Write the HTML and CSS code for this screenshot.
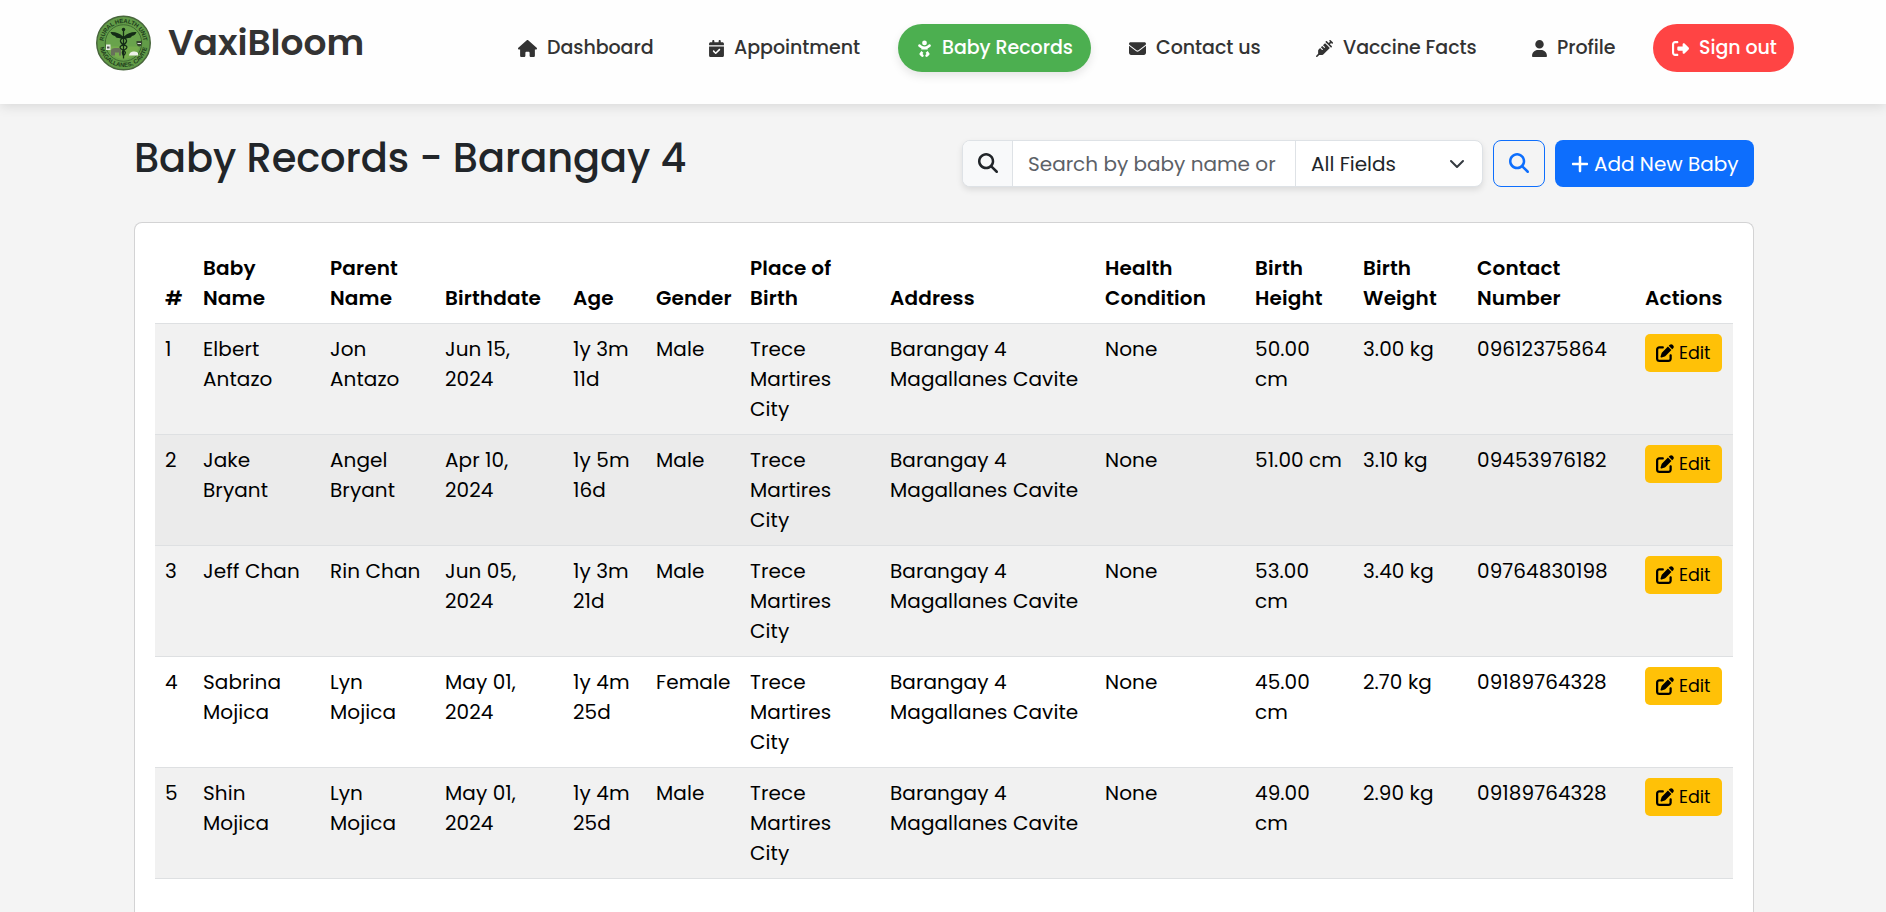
FILE: index.html
```html
<!DOCTYPE html>
<html lang="en">
<head>
<meta charset="utf-8">
<title>VaxiBloom - Baby Records</title>
<link rel="stylesheet" href="styles.css">
</head>
<body>
<svg class="sprite" aria-hidden="true">
  <symbol id="house" viewBox="0 0 576 512"><path d="M575.8 255.5c0 18-15 32.1-32 32.1h-32l.7 160.2c0 2.7-.2 5.4-.5 8.1V472c0 22.1-17.9 40-40 40H392c-22.1 0-40-17.9-40-40V384c0-17.7-14.3-32-32-32H256c-17.7 0-32 14.3-32 32v88c0 22.1-17.9 40-40 40H104c-22.1 0-40-17.9-40-40V287.6H32c-18 0-32-14-32-32.1c0-9 3-17 10-24L266.4 8c7-7 15-8 22-8s15 2 21 7L564.8 231.5c8 7 12 15 11 24z"/></symbol>
  <symbol id="calendar" viewBox="0 0 448 512"><path d="M128 0c17.7 0 32 14.3 32 32V64H288V32c0-17.7 14.3-32 32-32s32 14.3 32 32V64h48c26.5 0 48 21.5 48 48v48H0V112C0 85.5 21.5 64 48 64H96V32c0-17.7 14.3-32 32-32zM0 192H448V464c0 26.5-21.5 48-48 48H48c-26.5 0-48-21.5-48-48V192zM329 305c9.4-9.4 9.4-24.6 0-33.9s-24.6-9.4-33.9 0l-95 95-47-47c-9.4-9.4-24.6-9.4-33.9 0s-9.4 24.6 0 33.9l64 64c9.4 9.4 24.6 9.4 33.9 0L329 305z"/></symbol>
  <symbol id="baby" viewBox="0 0 448 512"><path d="M152 88a72 72 0 1 1 144 0A72 72 0 1 1 152 88zM39.7 144.5c13-17.9 38-21.8 55.9-8.8L131.8 162c26.8 19.5 59.1 30 92.2 30s65.4-10.5 92.2-30l36.2-26.4c17.9-13 42.9-9 55.9 8.8s9 42.9-8.800 55.9l-36.2 26.4c-13.6 9.9-28.1 18.2-43.3 25V288H128V251.7c-15.2-6.7-29.7-15.1-43.3-25L48.5 200.3c-17.9-13-21.8-38-8.8-55.9zm89.800 184.8l60.6 53-26 37.2 24.3 24.3c15.6 15.6 15.6 40.9 0 56.6s-40.9 15.6-56.6 0l-48-48C70 438.6 68.1 417 79.2 401.1l50.2-71.8zm128.5 53l60.6-53 50.2 71.8c11.1 15.9 9.2 37.5-4.5 51.2l-48 48c-15.6 15.6-40.9 15.6-56.6 0s-15.6-40.9 0-56.6L284 419.5l-26-37.2z"/></symbol>
  <symbol id="envelope" viewBox="0 0 512 512"><path d="M48 64C21.5 64 0 85.5 0 112c0 15.1 7.1 29.3 19.2 38.4L236.8 313.6c11.4 8.5 27 8.5 38.4 0L492.8 150.4c12.1-9.1 19.2-23.3 19.2-38.4c0-26.5-21.5-48-48-48H48zM0 176V384c0 35.3 28.7 64 64 64H448c35.3 0 64-28.7 64-64V176L294.4 339.2c-22.8 17.1-54 17.1-76.8 0L0 176z"/></symbol>
  <symbol id="syringe" viewBox="0 0 512 512"><path d="M441 7l32 32 32 32c9.4 9.4 9.4 24.6 0 33.9s-24.6 9.4-33.9 0l-15-15L417.9 128l55 55c9.4 9.4 9.4 24.6 0 33.9s-24.6 9.4-33.9 0l-72-72L295 73c-9.4-9.4-9.4-24.6 0-33.9s24.6-9.4 33.9 0l55 55L422.1 56 407 41c-9.4-9.4-9.4-24.6 0-33.9s24.6-9.4 33.9 0zM210.3 155.7l61.1-61.1c.3 .3 .6 .7 1 1l16 16 56 56 56 56 16 16c.3 .3 .6 .6 1 1l-191 191c-10.5 10.5-24.7 16.4-39.6 16.4H97.9L41 505c-9.4 9.4-24.6 9.4-33.9 0s-9.4-24.6 0-33.9l57-57V325.3c0-14.9 5.9-29.1 16.4-39.6l43.3-43.3 57 57c6.2 6.2 16.4 6.2 22.6 0s6.2-16.4 0-22.6l-57-57 41.4-41.4 57 57c6.2 6.2 16.4 6.2 22.6 0s6.2-16.4 0-22.6l-57-57z"/></symbol>
  <symbol id="user" viewBox="0 0 448 512"><path d="M224 256A128 128 0 1 0 224 0a128 128 0 1 0 0 256zm-45.7 48C79.8 304 0 383.8 0 482.3C0 498.7 13.3 512 29.7 512H418.3c16.4 0 29.7-13.3 29.7-29.7C448 383.8 368.2 304 269.7 304H178.3z"/></symbol>
  <symbol id="signout" viewBox="0 0 512 512"><path d="M377.9 105.9L500.7 228.7c7.2 7.2 11.3 17.1 11.3 27.3s-4.1 20.1-11.3 27.3L377.9 406.1c-6.4 6.4-15 9.9-24 9.9c-18.7 0-33.9-15.2-33.9-33.9l0-62.1-128 0c-17.7 0-32-14.3-32-32l0-64c0-17.7 14.3-32 32-32l128 0 0-62.1c0-18.7 15.2-33.9 33.9-33.9c9 0 17.6 3.6 24 9.9zM160 96L96 96c-17.7 0-32 14.3-32 32l0 256c0 17.7 14.3 32 32 32l64 0c17.7 0 32 14.3 32 32s-14.3 32-32 32l-64 0c-53 0-96-43-96-96L0 128C0 75 43 32 96 32l64 0c17.7 0 32 14.3 32 32s-14.3 32-32 32z"/></symbol>
  <symbol id="search" viewBox="0 0 512 512"><path d="M416 208c0 45.9-14.9 88.3-40 122.7L502.6 457.4c12.5 12.5 12.5 32.8 0 45.3s-32.8 12.5-45.3 0L330.7 376c-34.4 25.2-76.8 40-122.7 40C93.1 416 0 322.9 0 208S93.1 0 208 0S416 93.1 416 208zM208 352a144 144 0 1 0 0-288 144 144 0 1 0 0 288z"/></symbol>
  <symbol id="plus" viewBox="0 0 448 512"><path d="M256 80c0-17.7-14.3-32-32-32s-32 14.3-32 32V224H48c-17.7 0-32 14.3-32 32s14.3 32 32 32H192V432c0 17.7 14.3 32 32 32s32-14.3 32-32V288H400c17.7 0 32-14.3 32-32s-14.3-32-32-32H256V80z"/></symbol>
  <symbol id="edit" viewBox="0 0 512 512"><path d="M471.6 21.7c-21.9-21.9-57.3-21.9-79.2 0L362.3 51.7l97.9 97.9 30.1-30.1c21.9-21.9 21.9-57.3 0-79.2L471.6 21.7zm-299.2 220c-6.1 6.1-10.8 13.6-13.5 21.9l-29.6 88.8c-2.9 8.6-.6 18.1 5.8 24.6s15.9 8.7 24.6 5.8l88.8-29.6c8.2-2.7 15.7-7.4 21.9-13.5L437.7 172.3 339.7 74.3 172.4 241.7zM96 64C43 64 0 107 0 160V416c0 53 43 96 96 96H352c53 0 96-43 96-96V320c0-17.7-14.3-32-32-32s-32 14.3-32 32v96c0 17.7-14.3 32-32 32H96c-17.7 0-32-14.3-32-32V160c0-17.7 14.3-32 32-32h96c17.7 0 32-14.3 32-32s-14.3-32-32-32H96z"/></symbol>
</svg>

<header class="header">
  <a class="brand">
    <svg class="logo" viewBox="0 0 110 110">
      <defs>
        <path id="arc-top" d="M15 55a40 40 0 0 1 80 0"/>
        <path id="arc-bottom" d="M7 55a48 48 0 0 0 96 0"/>
      </defs>
      <circle cx="55" cy="55" r="53.5" fill="#629c48" stroke="#48663c" stroke-width="3"/>
      <circle cx="55" cy="55" r="36.5" fill="#69a34c" stroke="#3f6931" stroke-width="2"/>
      <path d="M23 62h64a33 33 0 0 1-64 0z" fill="#76ad4d"/>
      <text class="seal"><textPath href="#arc-top" startOffset="50%" text-anchor="middle" textLength="118">RURAL HEALTH UNIT</textPath></text>
      <text class="seal"><textPath href="#arc-bottom" startOffset="50%" text-anchor="middle" textLength="132">MAGALLANES, CAVITE</textPath></text>
      <rect x="20" y="58" width="9" height="11" fill="#e8eee4"/><path d="M22 62h5v4h-5z" fill="#555"/>
      <path d="M81 51h11v5q-1 5-5.500 6q-4.500-1-5.500-6z" fill="#36482f"/><path d="M83 56h7" stroke="#ddd" stroke-width="2"/>
      <path d="M30 80v-11q2-4 8-4h7q5 0 5 5v10h-4v-6h-8v6z" fill="#68705a"/>
      <path d="M66 80q1-7 8-8q8-1 10 3v5z" fill="#edf1e8"/>
      <g fill="none" stroke="#142b16" stroke-width="2.600">
        <path d="M55 29v57"/>
        <path d="M48 42q15 4 13 10t-10 8q-7 4 3 9q9 5 1 11M62 42q-15 4-13 10t10 8q7 4-3 9q-6 4-1 11"/>
      </g>
      <circle cx="55" cy="28" r="3.500" fill="#142b16"/>
      <path d="M54 42Q44 32 29 33q2 7 9 8q2 5 8 4q4 2 8 1zM56 42q10-10 25-9q-2 7-9 8q-2 5-8 4q-4 2-8 1z" fill="#142b16"/>
    </svg>
    <span class="brand-name">VaxiBloom</span>
  </a>
  <nav class="nav">
    <a class="link dashboard"><svg><use href="#house"/></svg><span>Dashboard</span></a>
    <a class="link appointment"><svg><use href="#calendar"/></svg><span>Appointment</span></a>
    <a class="link records active"><svg><use href="#baby"/></svg><span>Baby Records</span></a>
    <a class="link contact"><svg><use href="#envelope"/></svg><span>Contact us</span></a>
    <a class="link vaccine"><svg><use href="#syringe"/></svg><span>Vaccine Facts</span></a>
    <a class="link profile"><svg><use href="#user"/></svg><span>Profile</span></a>
    <a class="link signout"><svg><use href="#signout"/></svg><span>Sign out</span></a>
  </nav>
</header>

<main class="main">
  <div class="toolbar">
    <h1 class="title">Baby Records - Barangay 4</h1>
    <div class="tools">
      <div class="search-group">
        <span class="addon"><svg><use href="#search"/></svg></span>
        <div class="field">Search by baby name or</div>
        <div class="select"><span>All Fields</span><svg class="chevron" viewBox="0 0 16 16"><path d="m2 5 6 6 6-6"/></svg></div>
      </div>
      <button class="btn-search"><svg><use href="#search"/></svg></button>
      <button class="btn-add"><svg><use href="#plus"/></svg><span>Add New Baby</span></button>
    </div>
  </div>

  <section class="card">
    <table class="table">
      <colgroup><col class="c1"><col class="c2"><col class="c3"><col class="c4"><col class="c5"><col class="c6"><col class="c7"><col class="c8"><col class="c9"><col class="c10"><col class="c11"><col class="c12"><col class="c13"></colgroup>
      <thead>
        <tr><th>#</th><th>Baby<br>Name</th><th>Parent<br>Name</th><th>Birthdate</th><th>Age</th><th>Gender</th><th>Place of<br>Birth</th><th>Address</th><th>Health<br>Condition</th><th>Birth<br>Height</th><th>Birth<br>Weight</th><th>Contact<br>Number</th><th>Actions</th></tr>
      </thead>
      <tbody>
        <tr><td>1</td><td>Elbert<br>Antazo</td><td>Jon<br>Antazo</td><td>Jun 15,<br>2024</td><td>1y 3m<br>11d</td><td>Male</td><td>Trece<br>Martires<br>City</td><td>Barangay 4<br>Magallanes Cavite</td><td>None</td><td>50.00<br>cm</td><td>3.00 kg</td><td>09612375864</td><td><button class="btn-edit"><svg><use href="#edit"/></svg><span>Edit</span></button></td></tr>
        <tr class="hovered"><td>2</td><td>Jake<br>Bryant</td><td>Angel<br>Bryant</td><td>Apr 10,<br>2024</td><td>1y 5m<br>16d</td><td>Male</td><td>Trece<br>Martires<br>City</td><td>Barangay 4<br>Magallanes Cavite</td><td>None</td><td>51.00 cm</td><td>3.10 kg</td><td>09453976182</td><td><button class="btn-edit"><svg><use href="#edit"/></svg><span>Edit</span></button></td></tr>
        <tr><td>3</td><td>Jeff Chan</td><td>Rin Chan</td><td>Jun 05,<br>2024</td><td>1y 3m<br>21d</td><td>Male</td><td>Trece<br>Martires<br>City</td><td>Barangay 4<br>Magallanes Cavite</td><td>None</td><td>53.00<br>cm</td><td>3.40 kg</td><td>09764830198</td><td><button class="btn-edit"><svg><use href="#edit"/></svg><span>Edit</span></button></td></tr>
        <tr><td>4</td><td>Sabrina<br>Mojica</td><td>Lyn<br>Mojica</td><td>May 01,<br>2024</td><td>1y 4m<br>25d</td><td>Female</td><td>Trece<br>Martires<br>City</td><td>Barangay 4<br>Magallanes Cavite</td><td>None</td><td>45.00<br>cm</td><td>2.70 kg</td><td>09189764328</td><td><button class="btn-edit"><svg><use href="#edit"/></svg><span>Edit</span></button></td></tr>
        <tr><td>5</td><td>Shin<br>Mojica</td><td>Lyn<br>Mojica</td><td>May 01,<br>2024</td><td>1y 4m<br>25d</td><td>Male</td><td>Trece<br>Martires<br>City</td><td>Barangay 4<br>Magallanes Cavite</td><td>None</td><td>49.00<br>cm</td><td>2.90 kg</td><td>09189764328</td><td><button class="btn-edit"><svg><use href="#edit"/></svg><span>Edit</span></button></td></tr>
      </tbody>
    </table>
  </section>
</main>
</body>
</html>
```

FILE: styles.css
```css
* { box-sizing: border-box; }

body {
  margin: 0;
  background: #f4f4f4;
  color: #212529;
  font: 400 20px/30px Poppins, Inter, "Open Sans", sans-serif;
}

svg { display: block; flex: none; fill: currentColor; }
button { margin: 0; font: inherit; white-space: nowrap; }
.sprite { position: absolute; width: 0; height: 0; }

/* Header */
.header {
  position: relative;
  display: flex;
  justify-content: space-between;
  align-items: flex-start;
  height: 104px;
  padding: 14px 92px 0 96px;
  background: #fefefe;
  box-shadow: 0 2px 12px rgba(0, 0, 0, .12);
}
.brand { display: flex; align-items: center; gap: 17px; color: #333; }
.logo { width: 55px; height: 56px; }
.seal { font: 700 12px "Liberation Sans", sans-serif; fill: #1d3b1b; }
.brand-name { padding-top: 1px; font-size: 36px; font-weight: 600; line-height: 56px; }

.nav { display: flex; padding-top: 10px; color: #333; font-size: 19px; font-weight: 500; letter-spacing: -.04px; white-space: nowrap; }
.link {
  display: flex;
  align-items: center;
  gap: 10px;
  height: 48px;
  padding-left: 19px;
  border-radius: 24px;
}
.link svg { width: 17px; height: 17px; }
.dashboard { width: 191px; }
.dashboard svg { width: 19px; }
.appointment { width: 208px; }
.appointment svg, .records svg, .profile svg { width: 15px; }
.records { width: 193px; margin-right: 19px; }
.contact { width: 187px; }
.vaccine { width: 216px; }
.profile { width: 140px; }
.signout { width: 141px; background: #ff4444; color: #fff; }
.active { background: #4caf50; color: #fff; box-shadow: 0 4px 10px rgba(0, 0, 0, .1); }

/* Page heading and search */
.main { padding: 36px 132px 0 134px; }
.toolbar { display: flex; justify-content: space-between; height: 82px; }
.title { margin: -6px 0 0; font-size: 40px; font-weight: 500; line-height: 48px; letter-spacing: -.12px; }
.tools { display: flex; height: 47px; }
.search-group {
  display: flex;
  width: 521px;
  margin-right: 10px;
  border: 1px solid #dee2e6;
  border-radius: 8px;
  overflow: hidden;
  background: #fff;
  box-shadow: 0 3px 6px rgba(0, 0, 0, .1);
}
.addon {
  display: flex;
  align-items: center;
  width: 49px;
  padding: 0 0 2px 15px;
  background: #f8f9fa;
}
.addon svg, .btn-search svg { width: 20px; height: 20px; }
.field {
  width: 284px;
  padding: 8px 0 0 15px;
  border: solid #dee2e6;
  border-width: 0 1px;
  color: #5c6167;
  white-space: nowrap;
}
.select { display: flex; flex: 1; justify-content: space-between; padding: 8px 17px 0 15px; }
.chevron { width: 16px; height: 16px; margin-top: 7px; fill: none; stroke: #343a40; stroke-width: 2; stroke-linecap: round; stroke-linejoin: round; }
.btn-search {
  width: 52px;
  margin-right: 10px;
  padding: 0 0 2px 15px;
  border: 1px solid #0d6efd;
  border-radius: 8px;
  background: transparent;
  color: #0d6efd;
}
.btn-add {
  display: flex;
  align-items: center;
  gap: 5px;
  width: 199px;
  padding: 0 0 0 16px;
  border: 0;
  border-radius: 8px;
  background: #0d6efd;
  color: #fff;
}
.btn-add svg { width: 18px; height: 20px; }

/* Records table */
.card {
  height: 690px;
  padding: 20px;
  border: solid #d3d3d4;
  border-width: 1px 1px 0;
  border-radius: 8px 8px 0 0;
  background: #fff;
}
.table { width: 1578px; border-spacing: 0; table-layout: fixed; color: #000; letter-spacing: .08px; }
.c1 { width: 38px; } .c2 { width: 127px; } .c3 { width: 115px; }
.c4 { width: 128px; } .c5 { width: 83px; } .c6 { width: 94px; }
.c7 { width: 140px; } .c8 { width: 215px; } .c9 { width: 150px; }
.c10 { width: 108px; } .c11 { width: 114px; } .c12 { width: 168px; } .c13 { width: 98px; }
th, td { padding: 10px 0 10px 10px; border-bottom: 1px solid #dee0e2; text-align: left; white-space: nowrap; }
th { height: 81px; vertical-align: bottom; font-weight: 600; letter-spacing: .15px; }
td { height: 111px; vertical-align: top; }
tbody tr:nth-child(odd) { background: #f1f1f1; }
tbody .hovered { background: #ebebeb; }
.btn-edit {
  display: flex;
  align-items: center;
  gap: 5px;
  width: 77px;
  height: 38px;
  padding: 0 0 0 11px;
  border: 0;
  border-radius: 5px;
  background: #ffc107;
  color: #000;
  font-size: 17.5px;
}
.btn-edit svg { width: 18px; height: 18px; }
```
